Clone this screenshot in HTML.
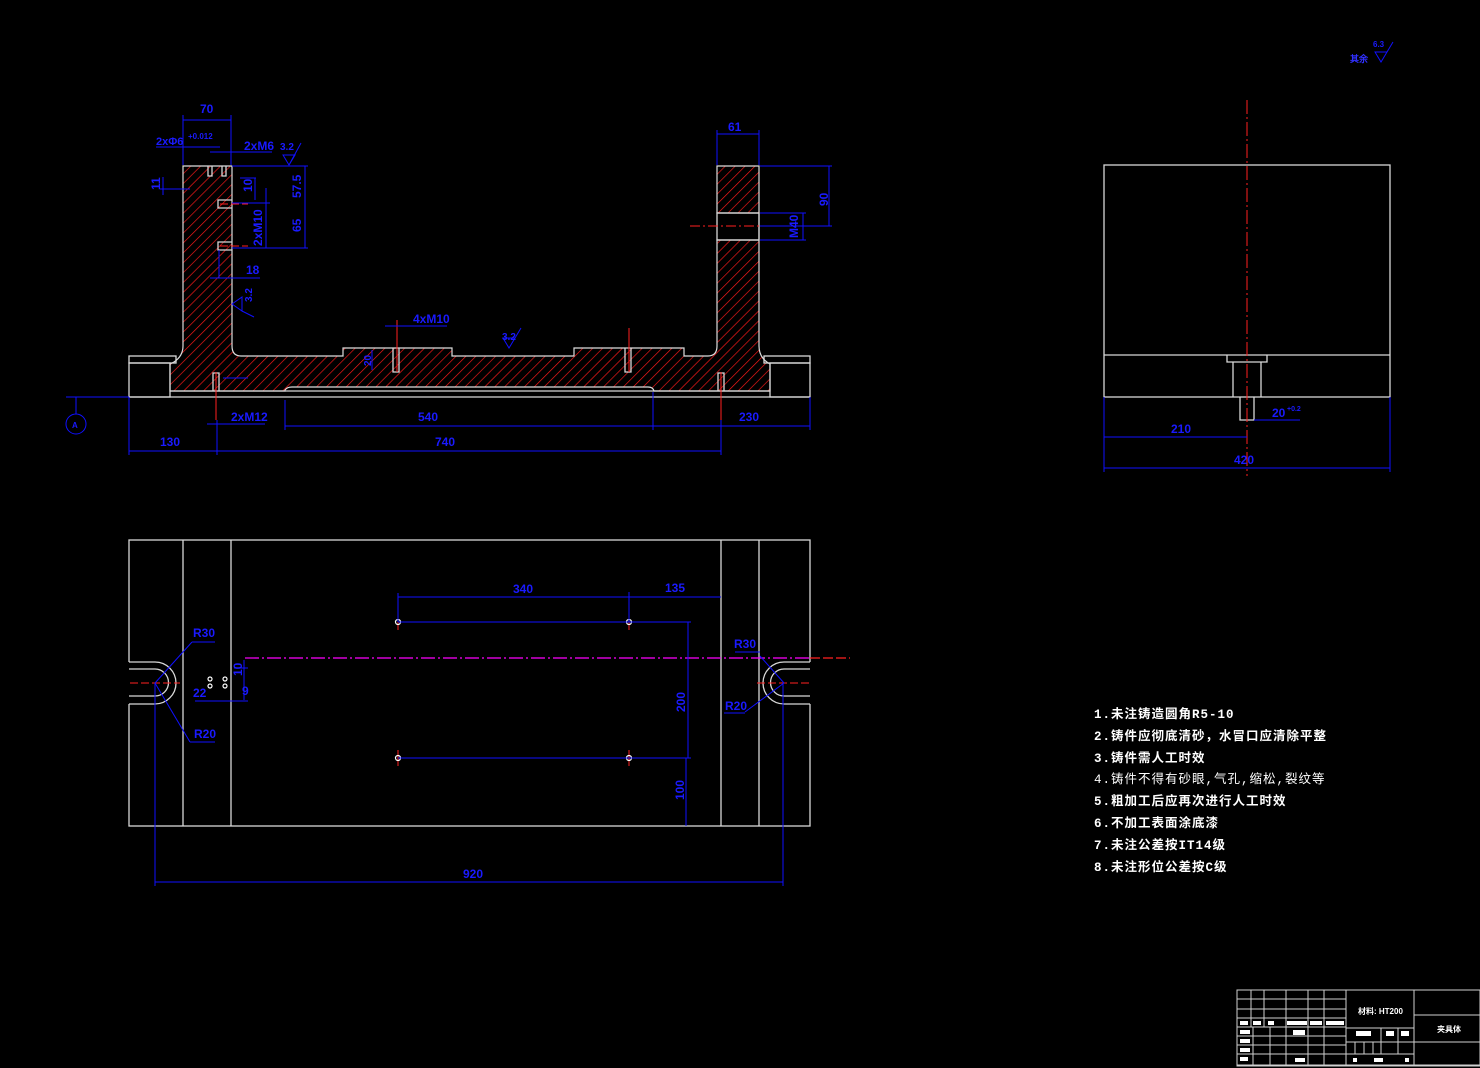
<!DOCTYPE html>
<html><head><meta charset="utf-8"><style>
html,body{margin:0;padding:0;background:#000;}
svg{display:block}
.w{stroke:#d8d8d8;stroke-width:1.3;fill:none}
.b{stroke:#1010ff;stroke-width:1;fill:none}
.r{stroke:#ff2020;stroke-width:1;fill:none}
.bt{fill:#1a1aff;font-family:"Liberation Sans",sans-serif;font-size:12px;font-weight:bold}
.nt{fill:#fff;font-family:"Liberation Mono","Noto Sans CJK SC",monospace;font-size:12.5px;font-weight:bold;letter-spacing:1px}
.tt{fill:#fff;font-family:"Liberation Sans","Noto Sans CJK SC",sans-serif;font-size:8px;font-weight:bold}
</style></head><body>
<svg width="1480" height="1068" viewBox="0 0 1480 1068" xmlns="http://www.w3.org/2000/svg">
<defs>
<pattern id="h" patternUnits="userSpaceOnUse" width="7" height="7" patternTransform="rotate(45)">
<line x1="0" y1="0" x2="0" y2="7" stroke="#ff1a1a" stroke-width="1.3"/>
</pattern>
</defs>
<rect width="1480" height="1068" fill="#000"/>

<!-- SECTION VIEW -->
<path d="M183,166 L183,346 Q183,356 174,362 L170,364 L170,391 L285,391 L285,390 Q287,387 292,387 L648,387 Q653,387 654,391 L770,391 L770,364 Q759,358 759,346 L759,166 L717,166 L717,213 L759,213 L759,240 L717,240 L717,346 Q717,356 708,356 L684,356 L684,348 L574,348 L574,356 L452,356 L452,348 L343,348 L343,356 L241,356 Q232,356 232,346 L232,166 Z" fill="url(#h)" stroke="#ddd" stroke-width="1.2"/>
<rect x="717" y="213" width="42" height="27" class="w"/>
<rect x="129" y="356" width="47" height="7" class="w"/>
<rect x="129" y="363" width="41" height="34" class="w"/>
<rect x="764" y="356" width="46" height="7" class="w"/>
<rect x="770" y="363" width="40" height="34" class="w"/>
<line x1="129" y1="397" x2="810" y2="397" class="w"/>
<line x1="170" y1="391" x2="770" y2="391" class="w"/>
<!-- holes -->
<g class="w" stroke-width="1">
<path d="M208,166 v10 h4 v-10"/><path d="M222,166 v10 h4 v-10"/>
<path d="M232,200 h-14 v8 h14"/><path d="M232,242 h-14 v8 h14"/>
<path d="M393,348 v24 h6 v-24"/><path d="M625,348 v24 h6 v-24"/>
<path d="M213,391 v-18 h6 v18"/><path d="M718,391 v-18 h6 v18"/>
</g>
<g class="r" stroke-width="1.5">
<line x1="397" y1="320" x2="397" y2="372"/><line x1="629" y1="328" x2="629" y2="372"/>
<line x1="216" y1="372" x2="216" y2="420"/><line x1="721" y1="372" x2="721" y2="420"/>
<line x1="220" y1="204" x2="248" y2="204" stroke-dasharray="8,3"/>
<line x1="220" y1="246" x2="248" y2="246" stroke-dasharray="8,3"/>
<line x1="690" y1="226" x2="760" y2="226" stroke-dasharray="10,3,2,3"/>
</g>
<!-- section dims -->
<g class="b">
<line x1="183" y1="120" x2="231" y2="120"/><line x1="183" y1="115" x2="183" y2="165"/><line x1="231" y1="115" x2="231" y2="165"/>
<line x1="717" y1="134" x2="759" y2="134"/><line x1="717" y1="130" x2="717" y2="165"/><line x1="759" y1="130" x2="759" y2="165"/>
<line x1="156" y1="147" x2="220" y2="147"/><line x1="210" y1="152" x2="272" y2="152"/>
<line x1="160" y1="189" x2="190" y2="189"/><line x1="163" y1="177" x2="163" y2="195"/>
<line x1="232" y1="166" x2="308" y2="166"/><line x1="305" y1="166" x2="305" y2="248"/><line x1="232" y1="248" x2="308" y2="248"/>
<line x1="232" y1="203" x2="270" y2="203"/><line x1="255" y1="178" x2="255" y2="200"/><line x1="240" y1="178" x2="256" y2="178"/>
<line x1="266" y1="188" x2="266" y2="248"/>
<line x1="210" y1="278" x2="260" y2="278"/><line x1="219" y1="250" x2="219" y2="278"/>
<line x1="760" y1="166" x2="832" y2="166"/><line x1="829" y1="166" x2="829" y2="226"/><line x1="760" y1="226" x2="832" y2="226"/>
<line x1="760" y1="213" x2="806" y2="213"/><line x1="760" y1="240" x2="806" y2="240"/><line x1="803" y1="213" x2="803" y2="240"/>
<line x1="385" y1="326" x2="447" y2="326"/>
<line x1="372" y1="350" x2="372" y2="370"/><line x1="223" y1="378" x2="248" y2="378"/>
<line x1="207" y1="424" x2="265" y2="424"/>
<line x1="285" y1="400" x2="285" y2="430"/><line x1="653" y1="392" x2="653" y2="430"/>
<line x1="285" y1="426" x2="810" y2="426"/><line x1="810" y1="397" x2="810" y2="430"/>
<line x1="129" y1="397" x2="129" y2="455"/><line x1="217" y1="420" x2="217" y2="455"/><line x1="721" y1="420" x2="721" y2="455"/>
<line x1="129" y1="451" x2="721" y2="451"/>
<line x1="66" y1="397" x2="129" y2="397"/><line x1="76" y1="397" x2="76" y2="414"/>
<circle cx="76" cy="424" r="10"/>
<path d="M283,155 l6,10 l6,-10 z M289,165 l12,-22"/>
<path d="M503,338 l6,10 l6,-10 z M509,348 l12,-20"/>
<path d="M232,304 l10,-7 l0,14 z M242,311 l12,6"/>
<path d="M1375,52 l6,10 l6,-10 z M1381,62 l12,-20"/>
</g>
<g class="bt">
<text x="200" y="113">70</text><text x="728" y="131">61</text>
<text x="156" y="145" font-size="11">2xΦ6</text><text x="188" y="139" font-size="8">+0.012</text>
<text x="244" y="150">2xM6</text><text x="280" y="150" font-size="10">3.2</text>
<text x="246" y="274">18</text><text x="413" y="323">4xM10</text><text x="502" y="340" font-size="10">3.2</text>
<text x="231" y="421">2xM12</text><text x="418" y="421">540</text><text x="739" y="421">230</text>
<text x="160" y="446">130</text><text x="435" y="446">740</text>
<text x="72" y="428" font-size="8">A</text>
<text x="1350" y="62" font-size="9" fill="#3030ff">其余</text><text x="1373" y="47" font-size="8">6.3</text>
<text transform="translate(160,190) rotate(-90)">11</text>
<text transform="translate(252,192) rotate(-90)">10</text>
<text transform="translate(301,198) rotate(-90)">57.5</text>
<text transform="translate(301,232) rotate(-90)">65</text>
<text transform="translate(262,246) rotate(-90)">2xM10</text>
<text transform="translate(828,206) rotate(-90)">90</text>
<text transform="translate(798,238) rotate(-90)">M40</text>
<text transform="translate(371,366) rotate(-90)" font-size="10">20</text>
<text transform="translate(252,302) rotate(-90)" font-size="10">3.2</text>
</g>

<!-- PLAN VIEW -->
<rect x="129" y="540" width="681" height="286" class="w"/>
<g class="w">
<line x1="183" y1="540" x2="183" y2="826"/><line x1="231" y1="540" x2="231" y2="826"/>
<line x1="721" y1="540" x2="721" y2="826"/><line x1="759" y1="540" x2="759" y2="826"/>
</g>
<rect x="127" y="662" width="50" height="42" fill="#000"/>
<rect x="762" y="662" width="50" height="42" fill="#000"/>
<path class="w" d="M129,662 H155 A21,21 0 0 1 155,704 H129 M129,669 H155 A13.5,13.5 0 0 1 155,696 H129"/>
<path class="w" d="M810,662 H784 A21,21 0 0 0 784,704 H810 M810,669 H784 A13.5,13.5 0 0 0 784,696 H810"/>
<line x1="245" y1="658" x2="810" y2="658" stroke="#ff00ff" stroke-width="1.2" stroke-dasharray="14,3,2,3"/>
<line x1="810" y1="658" x2="850" y2="658" stroke="#ff2020" stroke-width="1.2" stroke-dasharray="10,3"/>
<g class="r">
<line x1="130" y1="683" x2="180" y2="683" stroke-dasharray="8,3"/><line x1="757" y1="683" x2="810" y2="683" stroke-dasharray="8,3"/>
<line x1="398" y1="614" x2="398" y2="630"/><line x1="629" y1="614" x2="629" y2="630"/>
<line x1="398" y1="750" x2="398" y2="766"/><line x1="629" y1="750" x2="629" y2="766"/>
</g>
<g fill="none" stroke="#fff" stroke-width="1.2">
<circle cx="398" cy="622" r="2.5"/><circle cx="629" cy="622" r="2.5"/>
<circle cx="398" cy="758" r="2.5"/><circle cx="629" cy="758" r="2.5"/>
<circle cx="210" cy="679" r="2"/><circle cx="225" cy="679" r="2"/>
<circle cx="210" cy="686" r="2"/><circle cx="225" cy="686" r="2"/>
</g>
<g class="b">
<line x1="398" y1="593" x2="398" y2="622"/><line x1="629" y1="592" x2="629" y2="622"/>
<line x1="398" y1="597" x2="721" y2="597"/>
<line x1="398" y1="622" x2="691" y2="622"/><line x1="398" y1="758" x2="691" y2="758"/>
<line x1="688" y1="622" x2="688" y2="758"/><line x1="686" y1="758" x2="686" y2="826"/>
<line x1="155" y1="683" x2="155" y2="886"/><line x1="783" y1="683" x2="783" y2="886"/>
<line x1="155" y1="882" x2="783" y2="882"/>
<line x1="155" y1="683" x2="192" y2="642"/><line x1="192" y1="642" x2="215" y2="642"/>
<line x1="155" y1="683" x2="190" y2="742"/><line x1="190" y1="742" x2="215" y2="742"/>
<line x1="784" y1="683" x2="760" y2="656"/><line x1="735" y1="652" x2="760" y2="652"/>
<line x1="784" y1="683" x2="745" y2="712"/><line x1="724" y1="713" x2="745" y2="713"/>
<line x1="195" y1="701" x2="248" y2="701"/><line x1="234" y1="668" x2="248" y2="668"/><line x1="244" y1="660" x2="244" y2="700"/>
</g>
<g class="bt">
<text x="513" y="593">340</text><text x="665" y="592">135</text>
<text x="193" y="637">R30</text><text x="194" y="738">R20</text><text x="193" y="697">22</text>
<text x="734" y="648">R30</text><text x="725" y="710">R20</text>
<text x="463" y="878">920</text>
<text transform="translate(685,712) rotate(-90)">200</text>
<text transform="translate(684,800) rotate(-90)">100</text>
<text transform="translate(242,676) rotate(-90)">10</text>
<text x="242" y="695">9</text>
</g>

<!-- SIDE VIEW -->
<rect x="1104" y="165" width="286" height="232" class="w"/>
<line x1="1104" y1="355" x2="1390" y2="355" class="w"/>
<path class="w" d="M1227,355 v7 h40 v-7 M1233,362 v35 M1261,362 v35 M1240,397 v23 h14 v-23"/>
<line x1="1247" y1="100" x2="1247" y2="476" stroke="#ff2020" stroke-width="1" stroke-dasharray="14,3,2,3"/>
<g class="b">
<line x1="1104" y1="397" x2="1104" y2="472"/><line x1="1390" y1="397" x2="1390" y2="472"/>
<line x1="1104" y1="437" x2="1247" y2="437"/><line x1="1104" y1="468" x2="1390" y2="468"/>
<line x1="1254" y1="420" x2="1300" y2="420"/>
</g>
<g class="bt"><text x="1171" y="433">210</text><text x="1234" y="464">420</text><text x="1272" y="417">20</text><text x="1287" y="411" font-size="7">+0.2</text></g>

<!-- NOTES -->
<g class="nt">
<text x="1094" y="718">1.未注铸造圆角R5-10</text>
<text x="1094" y="740">2.铸件应彻底清砂，水冒口应清除平整</text>
<text x="1094" y="762">3.铸件需人工时效</text>
<text x="1094" y="783" font-weight="normal">4.铸件不得有砂眼,气孔,缩松,裂纹等</text>
<text x="1094" y="805">5.粗加工后应再次进行人工时效</text>
<text x="1094" y="827">6.不加工表面涂底漆</text>
<text x="1094" y="849">7.未注公差按IT14级</text>
<text x="1094" y="871">8.未注形位公差按C级</text>
</g>

<!-- TITLE BLOCK -->
<g stroke="#cfcfcf" stroke-width="1" fill="none">
<rect x="1237" y="990" width="243" height="76"/>
<line x1="1237" y1="1065" x2="1480" y2="1065"/>
<line x1="1346" y1="990" x2="1346" y2="1066"/><line x1="1414" y1="990" x2="1414" y2="1066"/>
<line x1="1237" y1="999" x2="1346" y2="999"/><line x1="1237" y1="1009" x2="1346" y2="1009"/>
<line x1="1237" y1="1018" x2="1346" y2="1018"/><line x1="1237" y1="1027" x2="1346" y2="1027"/>
<line x1="1237" y1="1036" x2="1346" y2="1036"/><line x1="1237" y1="1045" x2="1346" y2="1045"/>
<line x1="1237" y1="1054" x2="1346" y2="1054"/>
<line x1="1251" y1="990" x2="1251" y2="1027"/><line x1="1264" y1="990" x2="1264" y2="1027"/>
<line x1="1286" y1="990" x2="1286" y2="1066"/><line x1="1308" y1="990" x2="1308" y2="1066"/>
<line x1="1324" y1="990" x2="1324" y2="1066"/>
<line x1="1253" y1="1027" x2="1253" y2="1066"/><line x1="1270" y1="1027" x2="1270" y2="1066"/>
<line x1="1346" y1="1028" x2="1414" y2="1028"/><line x1="1346" y1="1054" x2="1414" y2="1054"/>
<line x1="1346" y1="1042" x2="1414" y2="1042"/>
<line x1="1381" y1="1028" x2="1381" y2="1054"/><line x1="1398" y1="1028" x2="1398" y2="1054"/>
<line x1="1355" y1="1042" x2="1355" y2="1054"/><line x1="1364" y1="1042" x2="1364" y2="1054"/><line x1="1373" y1="1042" x2="1373" y2="1054"/>
<line x1="1414" y1="1015" x2="1480" y2="1015"/><line x1="1414" y1="1042" x2="1480" y2="1042"/>
</g>
<g fill="#fff">
<rect x="1240" y="1021" width="8" height="4"/><rect x="1253" y="1021" width="8" height="4"/><rect x="1268" y="1021" width="6" height="4"/>
<rect x="1287" y="1021" width="20" height="4"/><rect x="1310" y="1021" width="12" height="4"/><rect x="1326" y="1021" width="18" height="4"/>
<rect x="1240" y="1030" width="10" height="4"/><rect x="1240" y="1039" width="10" height="4"/><rect x="1240" y="1048" width="10" height="4"/>
<rect x="1240" y="1057" width="8" height="4"/><rect x="1293" y="1030" width="12" height="5"/><rect x="1295" y="1058" width="10" height="4"/>
<rect x="1356" y="1031" width="15" height="5"/><rect x="1386" y="1031" width="8" height="5"/><rect x="1401" y="1031" width="8" height="5"/>
<rect x="1353" y="1058" width="4" height="4"/><rect x="1374" y="1058" width="9" height="4"/><rect x="1405" y="1058" width="4" height="4"/>
</g>
<text x="1358" y="1014" class="tt">材料: HT200</text>
<text x="1437" y="1032" class="tt">夹具体</text>
</svg>
</body></html>
